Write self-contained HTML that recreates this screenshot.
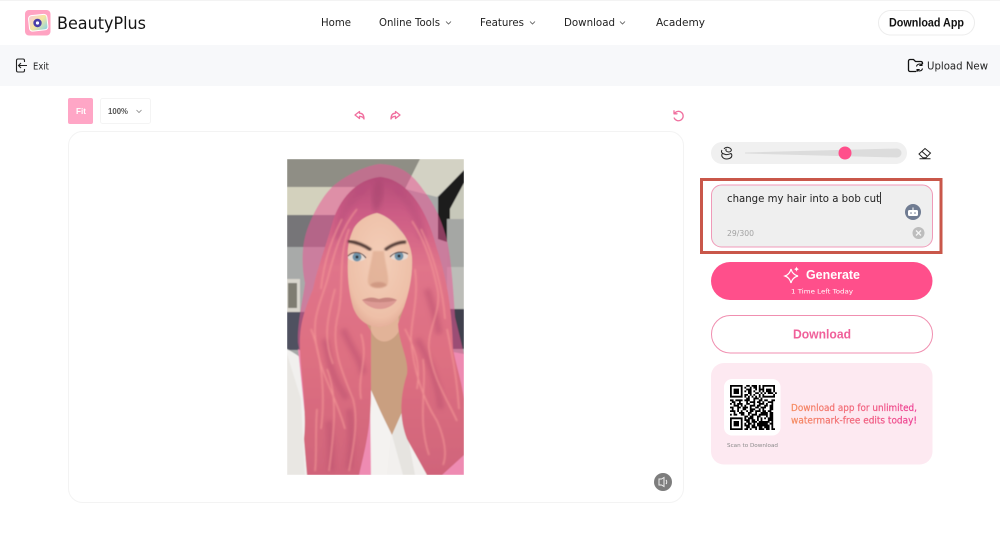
<!DOCTYPE html>
<html lang="en"><head><meta charset="utf-8"><title>BeautyPlus</title>
<style>
html,body{margin:0;padding:0;width:1000px;height:554px;overflow:hidden;background:#fff}
svg{position:absolute;left:0;top:0;display:block}
text{font-family:"DejaVu Sans","Liberation Sans",sans-serif}
.b{font-family:"Liberation Sans",sans-serif;font-weight:700}
</style></head><body>
<svg width="1000" height="554" viewBox="0 0 1000 554" xmlns="http://www.w3.org/2000/svg">
<defs>
<linearGradient id="pt" gradientUnits="userSpaceOnUse" x1="791" x2="917" y1="0" y2="0"><stop offset="0" stop-color="#f58a5c"/><stop offset="1" stop-color="#ee3f96"/></linearGradient>
<linearGradient id="logo" x1="0" x2="1" y1="0" y2="1"><stop offset="0" stop-color="#f8c8dc"/><stop offset=".5" stop-color="#f6e6a0"/><stop offset="1" stop-color="#7fd0e8"/></linearGradient>
<linearGradient id="hairg" gradientUnits="userSpaceOnUse" x1="0" x2="0" y1="18" y2="316"><stop offset="0" stop-color="#b44c78"/><stop offset=".12" stop-color="#cc5c85"/><stop offset=".3" stop-color="#e0748a"/><stop offset=".6" stop-color="#de7082"/><stop offset="1" stop-color="#d0647a"/></linearGradient>
<radialGradient id="skin" cx=".5" cy=".42" r=".62"><stop offset="0" stop-color="#f4cfb9"/><stop offset=".8" stop-color="#eec0a8"/><stop offset="1" stop-color="#e2aa96"/></radialGradient>
<filter id="b1"><feGaussianBlur stdDeviation=".5"/></filter>
<filter id="b2"><feGaussianBlur stdDeviation="2.500"/></filter>
<filter id="b3"><feGaussianBlur stdDeviation=".9"/></filter>
<clipPath id="photo"><rect width="177" height="316"/></clipPath>
</defs>

<rect x="0" y="0" width="1000" height="1" fill="#f3f3f3"/>
<!-- logo -->
<rect x="25" y="10" width="25.500" height="25.500" rx="4" fill="#ffa3c2"/>
<rect x="29" y="15" width="18.500" height="15.500" rx="3" fill="url(#logo)" stroke="#fff" stroke-width="1" transform="rotate(-6 38 23)"/>
<circle cx="37.500" cy="23" r="4.200" fill="#4a3fa8"/><circle cx="37.500" cy="23" r="1.600" fill="#fff"/>
<text x="57" y="29" font-size="17" fill="#151515" textLength="89" lengthAdjust="spacingAndGlyphs">BeautyPlus</text>
<!-- nav -->
<g font-size="10.500" fill="#222">
<text x="321" y="26" textLength="30" lengthAdjust="spacingAndGlyphs">Home</text>
<text x="379" y="26" textLength="61" lengthAdjust="spacingAndGlyphs">Online Tools</text>
<text x="480" y="26" textLength="44" lengthAdjust="spacingAndGlyphs">Features</text>
<text x="564" y="26" textLength="51" lengthAdjust="spacingAndGlyphs">Download</text>
<text x="656" y="26" textLength="49" lengthAdjust="spacingAndGlyphs">Academy</text>
</g>
<g fill="none" stroke="#555" stroke-width=".8">
<path d="M446 21.500l2.500 2.500 2.500-2.500"/><path d="M530 21.500l2.500 2.500 2.500-2.500"/><path d="M620 21.500l2.500 2.500 2.500-2.500"/>
</g>
<rect x="878.500" y="10.500" width="96" height="24.500" rx="12.200" fill="#fff" stroke="#ececec"/>
<text class="b" x="889" y="26.500" font-size="11.500" fill="#111" textLength="75" lengthAdjust="spacingAndGlyphs">Download App</text>

<!-- toolbar -->
<rect x="0" y="45" width="1000" height="41" fill="#f7f8fa"/>
<g fill="none" stroke="#222" stroke-width="1.100">
<path d="M24.500 62v-1.500a1.500 1.500 0 0 0-1.500-1.500h-5a1.500 1.500 0 0 0-1.500 1.500v10a1.500 1.500 0 0 0 1.500 1.500h5a1.500 1.500 0 0 0 1.500-1.500V69"/>
<path d="M27 65.500h-8.500M21 63l-2.500 2.500 2.500 2.500"/>
</g>
<text x="33" y="69.500" font-size="10" fill="#222" textLength="16" lengthAdjust="spacingAndGlyphs">Exit</text>
<g fill="none" stroke="#111" stroke-width="1.300">
<path d="M916 71.500h-6a1.500 1.500 0 0 1-1.500-1.500v-9a1.500 1.500 0 0 1 1.500-1.500h3.500l2 2h5.500a1.500 1.500 0 0 1 1.500 1.500v1"/>
<path d="M916.500 66.500a3 3 0 0 1 5.500-1M922.500 68.500a3 3 0 0 1-5.500 1M922 62.800V65.500h-2.700M917 72v-2.500h2.700" stroke-width="1.100"/>
</g>
<text x="927" y="69.500" font-size="10.500" fill="#222" textLength="61" lengthAdjust="spacingAndGlyphs">Upload New</text>

<!-- zoom controls -->
<rect x="68" y="98" width="25" height="26" rx="2" fill="#ffa6c6"/>
<text class="b" x="76" y="114" font-size="8.500" fill="#fff" textLength="10" lengthAdjust="spacingAndGlyphs">Fit</text>
<rect x="100.500" y="98.500" width="50" height="25" rx="2" fill="#fff" stroke="#f4f4f4"/>
<text class="b" x="108" y="114" font-size="8.500" fill="#555" textLength="20" lengthAdjust="spacingAndGlyphs">100%</text>
<path d="M136.500 110l2.500 2.500 2.500-2.500" fill="none" stroke="#888" stroke-width=".8"/>
<!-- undo redo reset -->
<g fill="none" stroke="#f0709f" stroke-width="1.300" stroke-linejoin="round" stroke-linecap="round">
<path d="M359.500 111.500l-4.500 3.500 4.500 3.500v-2.200c2 0 3.500.5 4.500 2.700 0-3.500-1.500-5.800-4.500-5.800z"/>
<path d="M395.500 111.500l4.500 3.500-4.500 3.500v-2.200c-2 0-3.500.5-4.500 2.700 0-3.500 1.500-5.800 4.500-5.800z"/>
<path d="M674.500 113.500a4.700 4.700 0 1 1-.3 4.500M674 110.800v3h3"/>
</g>
<!-- canvas -->
<rect x="68.500" y="131.500" width="615" height="371" rx="14" fill="#fff" stroke="#f3f3f3"/>

<!-- photo -->
<g transform="translate(287 159)" clip-path="url(#photo)">
<g filter="url(#b1)">
<rect width="177" height="316" fill="#a6a8a7"/>
<path d="M0 0H133L118 30 0 28Z" fill="#8f8e85"/>
<path d="M133 0H177V12L150 38 118 30Z" fill="#d3d2c4"/>
<path d="M0 28H70V56H0Z" fill="#d3d1bd"/>
<path d="M0 56H70V88H0Z" fill="#767478"/>
<path d="M0 88H60V152H0Z" fill="#a8aaa9"/>
<rect x="0" y="120" width="13" height="33" fill="#d9d6cd"/><rect x="1" y="124" width="9" height="25" fill="#7f7d72"/>
<rect x="0" y="153" width="40" height="38" fill="#4f5160"/>
<path d="M177 11 151 38V80L163 84V50L177 24Z" fill="#1c1c1e"/>
<path d="M163 50 177 24V60H163Z" fill="#c7c8ba"/>
<path d="M160 60H177V108H160Z" fill="#a5a7a4"/>
<path d="M160 108H177V150H160Z" fill="#bcbdb8"/>
<path d="M160 150H177V190H160Z" fill="#3f414d"/>
<path d="M0 190C5 193 12 196 20 205L40 316H0Z" fill="#f1f0ee"/>
<path d="M0 195V316H18L14 240Z" fill="#e9e7e3"/>
<!-- mask overlay -->
<path d="M93 5C80 6 60 16 50 24 38 32 26 54 20 71 14 88 15 110 18 124 16 140 10 165 11 184L20 234 24 316H156L177 300V195L168 158C166 124 164 100 160 81 156 66 150 50 140 36 130 22 120 6 93 5Z" fill="#e85a96" fill-opacity=".55"/>
<path d="M150 190 177 195V316H120Z" fill="#ee8bb2"/>
<path d="M11 190 30 200 44 316H24Z" fill="#ee8bb2"/>
<!-- chest -->
<path d="M78 140H118L128 200 122 250 105 276 82 232 76 200Z" fill="#c99f80"/>
<path d="M83 140H111L112 172C104 186 90 186 84 172Z" fill="#e2b398"/>
<!-- shirt center -->
<path d="M70 225 83 231 105 276 116 251 134 290 146 316H66Z" fill="#f2f0ee"/>
<path d="M105 276 116 251 128 316H116Z" fill="#e6e4e0"/>
<path d="M72 222 84 231 104 276 100 316H72Z" fill="#f4f2f0"/>
<path d="M72 232 83 232 84 316H72Z" fill="#ee8bb2"/>
<path d="M118 268 140 316 152 316 136 270Z" fill="#ee8bb2"/>
<!-- hair -->
<path d="M93 18C70 20 52 40 45 65 38 90 30 110 26 130 18 150 12 165 13 190 14 220 20 250 17 280L20 316H72C78 290 84 268 84 232L84 172C70 150 62 125 61 98 62 72 78 60 90 54 104 58 122 72 125 100 126 125 118 145 111 165 112 185 122 200 120 215 112 240 113 262 120 280L140 316H155L177 296V240C174 220 170 210 166 190 165 150 160 120 150 90 140 50 120 20 93 18Z" fill="url(#hairg)"/>
<path d="M92 20C84 30 82 44 89 54 97 44 99 30 92 20Z" fill="#a84670" opacity=".6" filter="url(#b2)"/>
<path d="M78 30C60 42 52 60 50 80M108 30C124 42 132 60 136 80" stroke="#b24c78" stroke-width="8" fill="none" opacity=".4" filter="url(#b2)"/>
<g fill="none" stroke="#b9506e" stroke-width="7" opacity=".5" filter="url(#b2)">
<path d="M38 180C42 205 46 220 60 240M56 170C64 190 74 200 76 215M130 180C142 200 150 220 154 250M42 262C44 280 44 295 44 312M62 250C66 270 64 290 62 310M140 130C146 150 150 160 152 175"/>
</g>
<g fill="none" stroke="#f59a98" stroke-width="1.300" opacity=".85" filter="url(#b3)">
<path d="M70 50C52 72 46 100 40 122 32 148 24 160 30 190 36 220 50 240 58 270"/>
<path d="M62 70C50 100 58 130 50 160 44 190 56 215 66 240 72 262 66 290 62 312"/>
<path d="M125 62C140 85 146 110 150 128 156 150 140 170 142 190 146 220 160 240 170 262"/>
<path d="M128 110C132 140 124 160 124 180 126 210 136 240 150 262 158 280 160 296 156 306"/>
<path d="M24 170C36 200 38 240 34 270M40 210C52 240 46 280 42 312M136 200C140 230 130 260 142 296M118 170C128 190 134 205 130 230M160 170C166 200 170 220 172 250M30 250C28 275 30 295 28 312"/>
<path d="M55 60C42 85 36 110 34 130M134 70C146 95 156 130 158 160M48 130C40 160 36 180 46 205M74 175C82 200 70 215 74 240"/>
</g>
<!-- face -->
<path d="M90 54C80 56 70 62 66 71 62 80 60 90 61 98 60 118 62 134 66 148 70 160 80 168 92 168 104 168 112 160 117 148 122 134 126 116 125 98 124 88 120 78 113 71 106 62 98 56 90 54Z" fill="url(#skin)"/>
<path d="M86 92C84 105 80 118 81 124 82 130 100 130 101 124 102 116 98 104 97 92Z" fill="#deab90" opacity=".7" filter="url(#b3)"/>
<path d="M83 126C86 130 96 130 100 126 97 122 86 122 83 126Z" fill="#c98f7a" opacity=".7" filter="url(#b3)"/>
<g filter="url(#b3)" style="opacity:.95">
<path d="M61 82C68 83 77 86 84 91" fill="none" stroke="#46332e" stroke-width="3"/>
<path d="M98 91C104 86 112 83 119 83" fill="none" stroke="#46332e" stroke-width="3"/>
</g>
<ellipse cx="70" cy="98" rx="9" ry="4.500" fill="#e8dad2"/><circle cx="70" cy="98" r="4.500" fill="#6f93a8"/><circle cx="70" cy="98" r="1.500" fill="#2a2f35"/>
<ellipse cx="112" cy="97" rx="9" ry="4.500" fill="#e8dad2"/><circle cx="112" cy="97" r="4.500" fill="#6f93a8"/><circle cx="112" cy="97" r="1.500" fill="#2a2f35"/>
<path d="M61 97C66 92 74 92 79 99M103 98C108 92 116 92 121 95" fill="none" stroke="#5e3c36" stroke-width="1.100"/>
<path d="M75 141C84 137 88 139 92 140 96 139 102 137 110 141 102 153 84 153 75 141Z" fill="#dd9a94"/>
<path d="M75 141C84 137 88 139 92 140 96 139 102 137 110 141 100 144 86 144 75 141Z" fill="#c88680"/>
</g>
</g>
<!-- sound icon -->
<circle cx="663" cy="482" r="9" fill="#7d7d7d"/>
<path d="M659 479h2.500l2.500-1.500v9l-2.500-1.500H659z" fill="none" stroke="#eee" stroke-width="1"/>
<path d="M666 480c1 1 1 3 0 4" fill="none" stroke="#eee" stroke-width="1"/>

<!-- slider -->
<rect x="711" y="142" width="196" height="22" rx="11" fill="#f0f0f0"/>
<path d="M745 152.500 897 148.500a4.500 4.500 0 0 1 0 9L745 153.500Z" fill="#dcdcdc"/>
<circle cx="845" cy="153" r="6.500" fill="#ff4f8b"/>
<g fill="none" stroke="#222" stroke-width="1">
<path d="M724 149c1-1.500 3-2 4.500-1.500 2 .5 3.500 2 2.500 3.500-1 1.300-3.500 1.200-4.500.2-1-.9-.8-1.800 0-2.400M722 150c-1 1.500-.5 2.800.8 3.500l2.700 1c2 .5 4-.5 5.500-1 1.500 1.500 1 4-1.500 5-2.500.8-5 .8-6.500-.8-1.300-1.200-1.500-2.700-.8-4"/>
<path d="M923 157.800 919 154l6-5.500 5.500 4.500-4.500 4.800zM922 151.500l5 4.500M919.500 158.800h11"/>
</g>

<!-- prompt -->
<rect x="701.500" y="179.500" width="239.500" height="73" fill="#fff" stroke="#c9574a" stroke-width="3"/>
<rect x="711.500" y="185" width="221" height="62" rx="10" fill="#efefef" stroke="#f09ab8"/>
<text x="727" y="202" font-size="11" fill="#222" textLength="153" lengthAdjust="spacingAndGlyphs">change my hair into a bob cut</text>
<rect x="880" y="192" width=".9" height="12" fill="#222"/>
<text x="727" y="236" font-size="8" fill="#a2a2a2" textLength="27" lengthAdjust="spacingAndGlyphs">29/300</text>
<circle cx="913" cy="212" r="8" fill="#707c92"/>
<rect x="908" y="210" width="10" height="6" rx="1.500" fill="#fff"/><rect x="912.500" y="207.500" width="1" height="3" fill="#fff"/>
<circle cx="911" cy="213" r=".8" fill="#707c92"/><circle cx="915" cy="213" r=".8" fill="#707c92"/>
<circle cx="918.500" cy="233" r="6" fill="#bdbdbd"/>
<path d="M916 230.500l5 5m0-5l-5 5" stroke="#f4f4f4" stroke-width="1.300"/>

<!-- generate -->
<rect x="711" y="262" width="221.500" height="38" rx="19" fill="#ff4f8b"/>
<path d="M791 269c1 4 3 6 7 7-4 1-6 3-7 7-1-4-3-6-6-7 3-1 5-3 6-7z" fill="none" stroke="#fff" stroke-width="1.200"/>
<path d="M796.500 266.500c.4 1.500 1 2.200 2.500 2.600-1.500.4-2.100 1-2.500 2.600-.4-1.600-1-2.200-2.500-2.600 1.500-.4 2.100-1.100 2.500-2.600z" fill="#fff"/>
<text class="b" x="806" y="279" font-size="13" fill="#fff" textLength="54" lengthAdjust="spacingAndGlyphs">Generate</text>
<text x="791" y="293.500" font-size="6.500" fill="#fff" textLength="62" lengthAdjust="spacingAndGlyphs">1 Time Left Today</text>

<!-- download -->
<rect x="711.500" y="315.500" width="221" height="37.500" rx="18.700" fill="#fff" stroke="#f08fb0"/>
<text class="b" x="793" y="338.500" font-size="13" fill="#f0609a" textLength="58" lengthAdjust="spacingAndGlyphs">Download</text>

<!-- promo -->
<rect x="711" y="363" width="221.500" height="101.500" rx="13" fill="#fde9f1"/>
<rect x="724" y="379" width="56.500" height="56.500" rx="8" fill="#fff"/>
<g transform="translate(730 385) scale(1.800)"><path fill="none" stroke="#000" d="M0 .5h7m2 0h2m1 0h3m1 0h1m1 0h7
M0 1.500h1m5 0h1m1 0h1m2 0h1m1 0h2m1 0h1m1 0h1m5 0h1
M0 2.500h1m1 0h3m1 0h1m2 0h3m2 0h1m1 0h2m0 0h1m1 0h3m1 0h1
M0 3.500h1m1 0h3m1 0h1m1 0h1m1 0h2m1 0h1m2 0h1m1 0h1m1 0h3m1 0h1
M0 4.500h1m1 0h3m1 0h1m3 0h2m2 0h2m1 0h1m1 0h1m1 0h3m1 0h1
M0 5.500h1m5 0h1m1 0h2m1 0h1m1 0h1m2 0h1m1 0h1m5 0h1
M0 6.500h7m1 0h1m1 0h1m1 0h1m1 0h1m1 0h1m1 0h7
M9 7.500h2m2 0h3m1 0h1
M0 8.500h2m1 0h4m1 0h3m2 0h1m2 0h2m1 0h2m2 0h2
M1 9.500h2m2 0h1m3 0h1m1 0h3m1 0h2m1 0h1m2 0h3
M0 10.500h1m1 0h1m1 0h3m2 0h2m2 0h1m2 0h3m1 0h1m2 0h1
M2 11.500h3m1 0h1m1 0h1m2 0h3m1 0h2m2 0h2m1 0h2
M0 12.500h2m2 0h2m1 0h3m1 0h1m2 0h2m1 0h3m2 0h1m0 0h1
M1 13.500h1m2 0h1m2 0h2m2 0h3m2 0h1m1 0h1m3 0h2
M0 14.500h3m1 0h1m1 0h1m2 0h1m1 0h2m1 0h3m1 0h2m1 0h2
M2 15.500h1m2 0h3m2 0h2m2 0h1m2 0h4m1 0h2
M0 16.500h1m1 0h2m2 0h2m2 0h1m1 0h3m1 0h5m1 0h2
M8 17.500h2m1 0h2m2 0h2m3 0h1m1 0h2
M0 18.500h7m1 0h1m1 0h3m2 0h1m1 0h1m1 0h1m1 0h3
M0 19.500h1m5 0h1m1 0h3m1 0h2m1 0h1m1 0h1m3 0h3
M0 20.500h1m1 0h3m1 0h1m2 0h2m1 0h3m1 0h6m1 0h1
M0 21.500h1m1 0h3m1 0h1m1 0h1m1 0h2m1 0h1m1 0h6m1 0h2
M0 22.500h1m1 0h3m1 0h1m1 0h3m1 0h2m1 0h7m1 0h1
M0 23.500h1m5 0h1m2 0h2m1 0h3m1 0h2m1 0h3m1 0h1
M0 24.500h7m1 0h2m1 0h1m2 0h1m1 0h3m1 0h2m1 0h2"/></g>
<text x="727" y="447" font-size="5.500" fill="#8a8a8a" textLength="51" lengthAdjust="spacingAndGlyphs">Scan to Download</text>
<g font-size="9.500" fill="url(#pt)" stroke="url(#pt)" stroke-width=".2">
<text x="791" y="411" textLength="126" lengthAdjust="spacingAndGlyphs">Download app for unlimited,</text>
<text x="791" y="423.500" textLength="126" lengthAdjust="spacingAndGlyphs">watermark-free edits today!</text>
</g>
</svg>
</body></html>
